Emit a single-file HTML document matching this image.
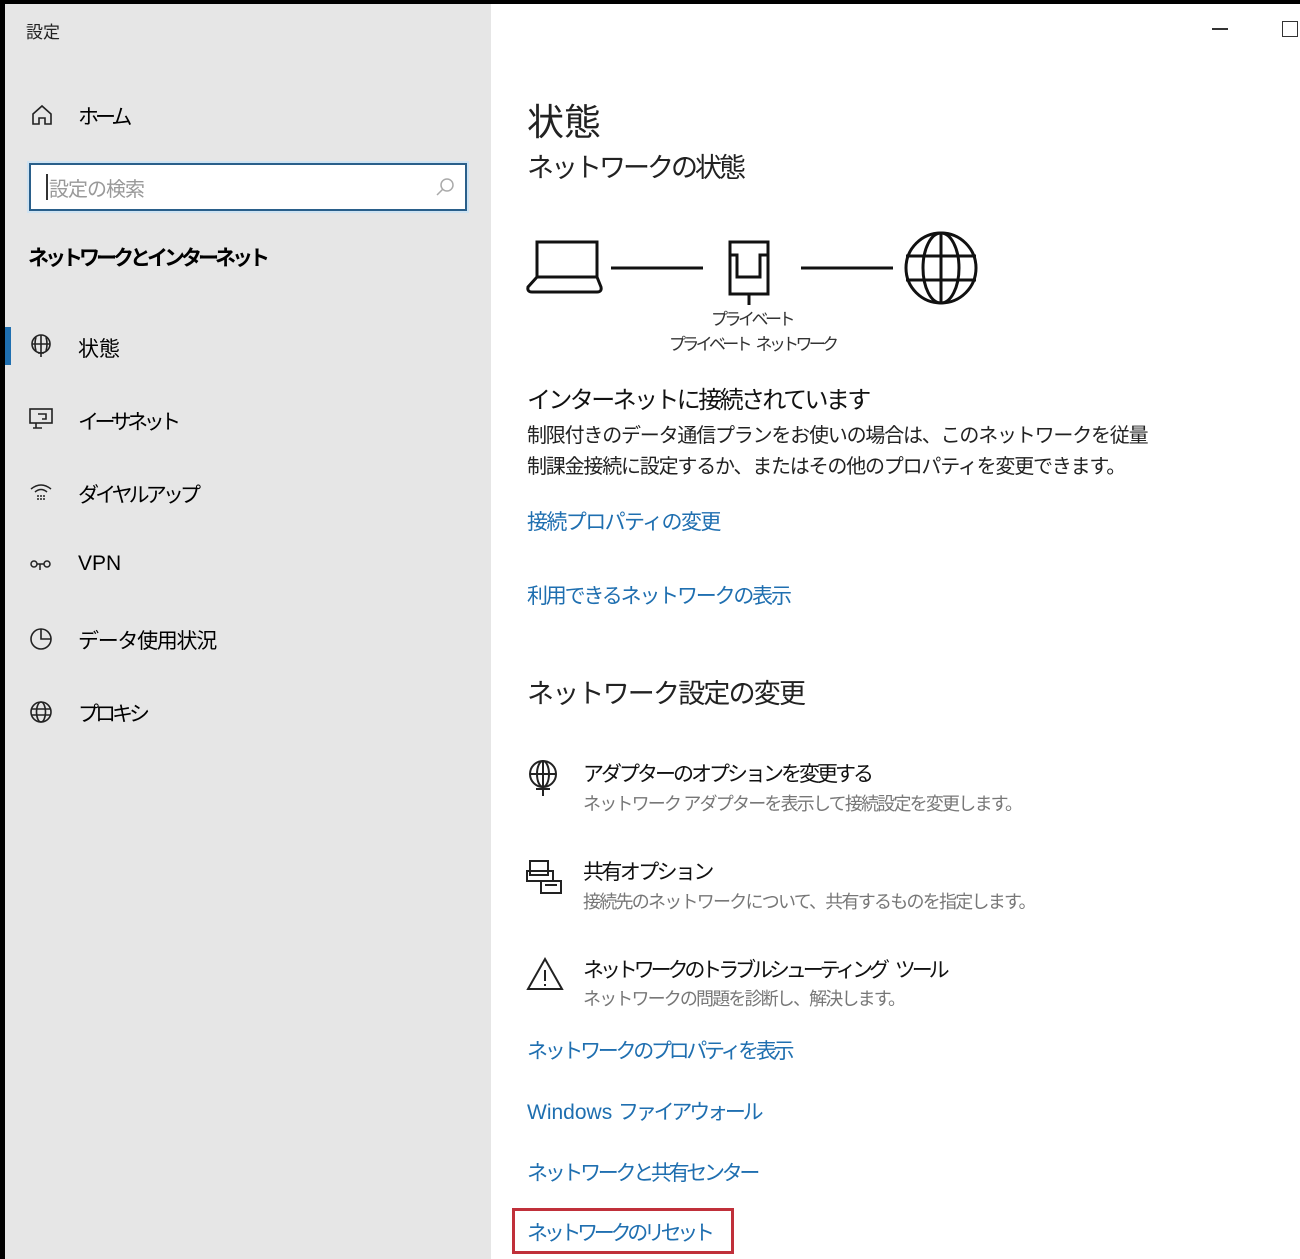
<!DOCTYPE html>
<html><head><meta charset="utf-8"><style>
*{margin:0;padding:0;box-sizing:border-box}
body{width:1300px;height:1259px;overflow:hidden;background:#000;font-family:"Liberation Sans","Noto Sans CJK JP",sans-serif;color:#000;position:relative}
.side{position:absolute;left:5px;top:4px;width:486px;height:1255px;background:#e6e6e6}
.main{position:absolute;left:491px;top:4px;width:809px;height:1255px;background:#fff}
.t{position:absolute;white-space:nowrap}
.link{color:#1f6fb0;font-size:21px}
svg{position:absolute}
</style></head><body>
<div class="side"></div>
<div class="main"></div>
<div class="t" style="left:26px;top:18px;font-size:17px;color:#222">設定</div>
<svg style="left:30px;top:103px" width="24" height="24" viewBox="0 0 24 24" fill="none" stroke="#222" stroke-width="1.6"><path d="M3 11 L12 3 L21 11 V21 H15 V15 H9 V21 H3 Z"/></svg>
<div class="t" style="left:78px;top:101px;font-size:21px;letter-spacing:-4px">ホーム</div>
<div style="position:absolute;left:29px;top:163px;width:438px;height:48px;border:2px solid #2a5f8a;background:#fff;box-shadow:0 0 0 2px #cfe3f2"></div>
<div style="position:absolute;left:46px;top:174px;width:2px;height:26px;background:#333"></div>
<div class="t" style="left:49px;top:173px;font-size:20px;color:#999;letter-spacing:-1px">設定の検索</div>
<svg style="left:434px;top:176px" width="22" height="22" viewBox="0 0 22 22" fill="none" stroke="#aaa" stroke-width="1.5"><circle cx="13" cy="9" r="6"/><path d="M9 13 L3 19"/></svg>
<div class="t" style="left:28px;top:242px;font-size:21px;font-weight:bold;letter-spacing:-4px">ネットワークとインターネット</div>
<div style="position:absolute;left:5px;top:327px;width:6px;height:38px;background:#1f6fb0"></div>
<svg style="left:28px;top:333px" width="26" height="26" viewBox="0 0 26 26" fill="none" stroke="#222" stroke-width="1.6"><circle cx="13" cy="11" r="9"/><path d="M4 11 H22 M13 2 V20 M8 4 Q6 11 8 18 M18 4 Q20 11 18 18 M10 20 H16 M13 20 V24"/></svg>
<div class="t" style="left:78px;top:333px;font-size:21px">状態</div>
<svg style="left:28px;top:406px" width="28" height="26" viewBox="0 0 28 26" fill="none" stroke="#222" stroke-width="1.6"><rect x="2" y="3" width="22" height="14"/><path d="M8 17 V22 M5 22 H14 M10 8 H18 V13 H14"/></svg>
<div class="t" style="left:78px;top:406px;font-size:21px;letter-spacing:-4.5px">イーサネット</div>
<svg style="left:28px;top:480px" width="26" height="24" viewBox="0 0 26 24" fill="none" stroke="#222" stroke-width="1.5"><path d="M3 9 Q13 1 23 9 M7 12 Q13 7 19 12"/><path d="M9 16 h2 M12 16 h2 M15 16 h2 M9 19 h2 M12 19 h2 M15 19 h2"/></svg>
<div class="t" style="left:78px;top:479px;font-size:21px;letter-spacing:-3.9px">ダイヤルアップ</div>
<svg style="left:28px;top:556px" width="26" height="20" viewBox="0 0 26 20" fill="none" stroke="#222" stroke-width="1.5"><circle cx="6" cy="8" r="3"/><circle cx="19" cy="8" r="3"/><path d="M9 8 H16 M12 8 V14"/></svg>
<div class="t" style="left:78px;top:552px;font-size:21px">VPN</div>
<svg style="left:28px;top:626px" width="26" height="26" viewBox="0 0 26 26" fill="none" stroke="#222" stroke-width="1.6"><circle cx="13" cy="13" r="10"/><path d="M13 3 V13 H23"/></svg>
<div class="t" style="left:78px;top:625px;font-size:21px;letter-spacing:-1.3px">データ使用状況</div>
<svg style="left:28px;top:699px" width="26" height="26" viewBox="0 0 26 26" fill="none" stroke="#222" stroke-width="1.6"><circle cx="13" cy="13" r="10"/><ellipse cx="13" cy="13" rx="4.5" ry="10"/><path d="M3 10 H23 M3 16 H23"/></svg>
<div class="t" style="left:78px;top:698px;font-size:21px;letter-spacing:-4px">プロキシ</div>

<div class="t" style="left:1212px;top:28px;width:16px;height:2px;background:#333"></div>
<div class="t" style="left:1282px;top:21px;width:16px;height:16px;border:1.5px solid #333"></div>

<div class="t" style="left:527px;top:92px;font-size:37px;color:#222">状態</div>
<div class="t" style="left:527px;top:146px;font-size:27px;color:#222;letter-spacing:-3px">ネットワークの状態</div>
<svg style="left:525px;top:230px" width="460" height="80" viewBox="0 0 460 80" fill="none" stroke="#111" stroke-width="3"><rect x="12" y="12" width="60" height="35"/><path d="M12 47 L3 57 Q2 62 7 62 H72 Q77 62 76 57 L72 47"/><path d="M86 38 H178 M276 38 H368"/><rect x="205" y="12" width="38" height="52"/><path d="M205 25 H212 V47 H235 V25 H243 M224 64 V75"/><circle cx="416" cy="38" r="35"/><ellipse cx="416" cy="38" rx="18" ry="35"/><path d="M381 26 H451 M381 50 H451 M416 3 V73"/></svg>
<div class="t" style="left:711px;top:305px;font-size:17px;color:#333;letter-spacing:-3.5px">プライベート</div>
<div class="t" style="left:669px;top:330px;font-size:17px;color:#333;letter-spacing:-3.7px">プライベート<span style="letter-spacing:2px"> </span>ネットワーク</div>
<div class="t" style="left:527px;top:380px;font-size:24px;color:#111;letter-spacing:-2.6px">インターネットに接続されています</div>
<div class="t" style="left:527px;top:421px;font-size:20px;color:#222;line-height:31px;letter-spacing:-1.2px">制限付きのデータ通信プランをお使いの場合は、このネットワークを従量<br>制課金接続に設定するか、またはその他のプロパティを変更できます。</div>
<div class="t link" style="left:527px;top:506px;letter-spacing:-1.6px">接続プロパティの変更</div>
<div class="t link" style="left:527px;top:580px;letter-spacing:-2.2px">利用できるネットワークの表示</div>
<div class="t" style="left:527px;top:672px;font-size:27px;color:#222;letter-spacing:-1.8px">ネットワーク設定の変更</div>
<svg style="left:525px;top:758px" width="40" height="42" viewBox="0 0 40 42" fill="none" stroke="#222" stroke-width="2"><circle cx="18" cy="16" r="13"/><ellipse cx="18" cy="16" rx="6" ry="13"/><path d="M5 16 H31 M18 3 V29 M11 31 H25 M18 29 V38"/></svg>
<div class="t" style="left:583px;top:758px;font-size:21px;color:#111;letter-spacing:-3px">アダプターのオプションを変更する</div>
<div class="t" style="left:583px;top:790px;font-size:18px;color:#777;letter-spacing:-1.8px">ネットワーク アダプターを表示して接続設定を変更します。</div>
<svg style="left:525px;top:857px" width="40" height="42" viewBox="0 0 40 42" fill="none" stroke="#222" stroke-width="2"><rect x="5" y="4" width="18" height="14"/><rect x="2" y="14" width="26" height="10"/><path d="M16 24 V36 H36 V24 H26 M20 28 H32"/></svg>
<div class="t" style="left:583px;top:856px;font-size:21px;color:#111;letter-spacing:-2.6px">共有オプション</div>
<div class="t" style="left:583px;top:888px;font-size:18px;color:#777;letter-spacing:-1.75px">接続先のネットワークについて、共有するものを指定します。</div>
<svg style="left:525px;top:955px" width="40" height="40" viewBox="0 0 40 40" fill="none" stroke="#222" stroke-width="2"><path d="M20 4 L37 34 H3 Z M20 15 V26 M20 29 V31"/></svg>
<div class="t" style="left:583px;top:954px;font-size:21px;color:#111;letter-spacing:-4.1px">ネットワークのトラブルシューティング<span style="letter-spacing:3px"> </span>ツール</div>
<div class="t" style="left:583px;top:985px;font-size:18px;color:#777;letter-spacing:-1.85px">ネットワークの問題を診断し、解決します。</div>
<div class="t link" style="left:527px;top:1035px;letter-spacing:-3.3px">ネットワークのプロパティを表示</div>
<div class="t link" style="left:527px;top:1096px">Windows <span style="letter-spacing:-3.2px">ファイアウォール</span></div>
<div class="t link" style="left:527px;top:1157px;letter-spacing:-3.3px">ネットワークと共有センター</div>
<div style="position:absolute;left:512px;top:1208px;width:222px;height:46px;border:3px solid #c0303a"></div>
<div class="t link" style="left:527px;top:1217px;letter-spacing:-4.3px">ネットワークのリセット</div>
</body></html>
